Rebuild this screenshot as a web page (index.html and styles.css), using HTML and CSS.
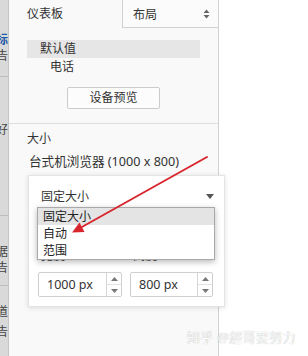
FILE: index.html
```html
<!DOCTYPE html>
<html lang="zh">
<head>
<meta charset="utf-8">
<link rel="stylesheet" href="styles.css">
</head>
<body>
<div class="page">
  <div class="strip">
    <div class="s-item blue" style="margin-top:32px">标</div>
    <div class="s-item">告</div>
    <div class="s-sep" style="margin-top:12px"></div>
    <div class="s-item" style="margin-top:45px">好</div>
    <div class="s-sep" style="margin-top:77px"></div>
    <div class="s-item" style="margin-top:28px">据</div>
    <div class="s-item">告</div>
    <div class="s-sep" style="margin-top:9px"></div>
    <div class="s-item" style="margin-top:18px">道</div>
    <div class="s-item" style="margin-top:4px">告</div>
  </div>

  <div class="panel">
    <div class="tabs">
      <div class="tab tab-active">仪表板</div>
      <div class="tab tab-layout">
        <span>布局</span>
        <svg class="updown" width="7" height="10" viewBox="0 0 7 10"><path d="M3.5 0.5 L6.5 4 L0.5 4 Z M3.5 9.5 L6.5 6 L0.5 6 Z" fill="#666"/></svg>
      </div>
    </div>

    <div class="tree">
      <div class="tree-row selected">默认值</div>
      <div class="tree-row child">电话</div>
    </div>

    <div class="btn-wrap"><div class="btn">设备预览</div></div>

    <div class="section">
      <div class="label">大小</div>
      <div class="size-value">台式机浏览器 (1000 x 800)</div>

      <div class="popup">
        <div class="select-row">
          <span>固定大小</span>
          <svg width="8" height="5" viewBox="0 0 8 5"><path d="M0 0 L8 0 L4 5 Z" fill="#555"/></svg>
        </div>
        <div class="dim-labels">
          <span>宽度</span>
          <span>高度</span>
        </div>
        <div class="dims">
          <div class="num">
            <span class="num-text">1000 px</span>
            <div class="spin">
              <div class="spin-btn"><svg width="7" height="4" viewBox="0 0 7 4"><path d="M3.5 0 L7 4 L0 4 Z" fill="#777"/></svg></div>
              <div class="spin-btn"><svg width="7" height="4" viewBox="0 0 7 4"><path d="M0 0 L7 0 L3.5 4 Z" fill="#777"/></svg></div>
            </div>
          </div>
          <div class="num">
            <span class="num-text">800 px</span>
            <div class="spin">
              <div class="spin-btn"><svg width="7" height="4" viewBox="0 0 7 4"><path d="M3.5 0 L7 4 L0 4 Z" fill="#777"/></svg></div>
              <div class="spin-btn"><svg width="7" height="4" viewBox="0 0 7 4"><path d="M0 0 L7 0 L3.5 4 Z" fill="#777"/></svg></div>
            </div>
          </div>
        </div>

        <div class="listbox">
          <div class="opt opt-hl">固定大小</div>
          <div class="opt">自动</div>
          <div class="opt">范围</div>
        </div>
      </div>
    </div>
  </div>

  <svg class="annot" width="308" height="356" viewBox="0 0 308 356">
    <line x1="207" y1="157" x2="81" y2="227.5" stroke="#d8262e" stroke-width="2" stroke-linecap="round"/>
    <polygon points="72,232.5 84.5,232 79.5,222.5" fill="#d8262e"/>
  </svg>

  <div class="watermark">知乎 @超哥要努力</div>
</div>
</body>
</html>
```

FILE: styles.css
```css
* { box-sizing: border-box; }
html, body { margin: 0; padding: 0; background: #ffffff; }
body {
  font-family: "Noto Sans", "Noto Sans CJK SC", sans-serif;
  font-size: 12px;
  color: #333;
}
.page {
  position: relative;
  width: 308px;
  height: 356px;
  display: flex;
  overflow: hidden;
}

/* left cut-off strip */
.strip {
  width: 9px;
  flex: none;
  background: #d9d9d9;
  border-right: 1px solid #c4c4c4;
  overflow: hidden;
}
.s-item {
  height: 16px;
  line-height: 16px;
  white-space: nowrap;
  margin-left: -4px;
  color: #444;
  font-size: 12px;
}
.s-item.blue { color: #1e5aa8; font-weight: bold; }
.s-sep { height: 1px; background: #bdbdbd; }

/* main panel */
.panel {
  width: 210px;
  flex: none;
  background: #f9f9f9;
  border-right: 1px solid #d2d2d2;
  height: 356px;
}
.tabs {
  display: flex;
  height: 28px;
}
.tab-active {
  width: 113px;
  padding-left: 18px;
  line-height: 28px;
  font-size: 12px;
}
.tab-layout {
  flex: 1;
  border-left: 1px solid #d0d0d0;
  border-bottom: 1px solid #d0d0d0;
  display: flex;
  align-items: center;
  justify-content: space-between;
  padding: 0 8px 0 10px;
  background: #fbfbfb;
}

.tree { padding-top: 12px; }
.tree-row {
  height: 18px;
  line-height: 18px;
}
.tree-row.selected {
  margin-left: 18px;
  width: 173px;
  padding-left: 13px;
  background: #e6e6e6;
}
.tree-row.child { padding-left: 41px; }

.btn-wrap {
  padding: 11px 0 14px 58px;
  border-bottom: 1px solid #dedede;
}
.btn {
  width: 93px;
  height: 22px;
  line-height: 20px;
  text-align: center;
  border: 1px solid #cccccc;
  border-radius: 2px;
  background: #fcfcfc;
}

.section { padding-top: 7px; }
.label {
  padding-left: 18px;
  height: 16px;
  line-height: 16px;
}
.size-value {
  padding-left: 20px;
  margin-top: 7px;
  height: 16px;
  line-height: 16px;
  white-space: nowrap;
  font-size: 12.6px;
}

.popup {
  position: relative;
  z-index: 2;
  margin-top: 5px;
  margin-left: 19px;
  width: 197px;
  height: 132px;
  background: #ffffff;
  border: 1px solid #e4e4e4;
  box-shadow: 0 1px 5px rgba(0,0,0,0.12);
  padding: 11px 10px 0 9px;
}
.select-row {
  height: 18px;
  display: flex;
  align-items: center;
  justify-content: space-between;
  padding-left: 3px;
  padding-right: 0;
}
.dim-labels {
  margin-top: 44px;
  height: 14px;
  line-height: 14px;
  display: grid;
  grid-template-columns: 92px 83px;
  padding-left: 3px;
}
.dims {
  margin-top: 9px;
  display: grid;
  grid-template-columns: 84px 83px;
  column-gap: 8px;
}
.num {
  height: 25px;
  border: 1px solid #cfcfcf;
  border-radius: 2px;
  display: flex;
  align-items: center;
  justify-content: space-between;
  background: #fff;
}
.num-text {
  padding-left: 8px;
  font-size: 12.5px;
  color: #333;
}
.spin {
  width: 15px;
  height: 100%;
  border-left: 1px solid #d6d6d6;
  display: flex;
  flex-direction: column;
}
.spin-btn {
  flex: 1;
  display: flex;
  align-items: center;
  justify-content: center;
}
.spin-btn + .spin-btn { border-top: 1px solid #e2e2e2; }

.listbox {
  position: absolute;
  left: 8px;
  top: 31px;
  width: 178px;
  background: #ffffff;
  border: 1px solid #a9a9a9;
  box-shadow: 0 2px 6px rgba(0,0,0,0.28);
}
.opt {
  height: 17px;
  line-height: 17px;
  padding-left: 5px;
  font-size: 12px;
  color: #222;
}
.opt-hl { background: #e4e4e4; }

.annot {
  position: absolute;
  left: 0;
  top: 0;
  z-index: 5;
  pointer-events: none;
}

.watermark {
  position: absolute;
  left: 187px;
  top: 327px;
  z-index: 6;
  font-size: 13px;
  color: #fafafa;
  white-space: nowrap;
  text-shadow: 0 0 1px rgba(0,0,0,0.35);
  letter-spacing: 0.3px;
}
```
